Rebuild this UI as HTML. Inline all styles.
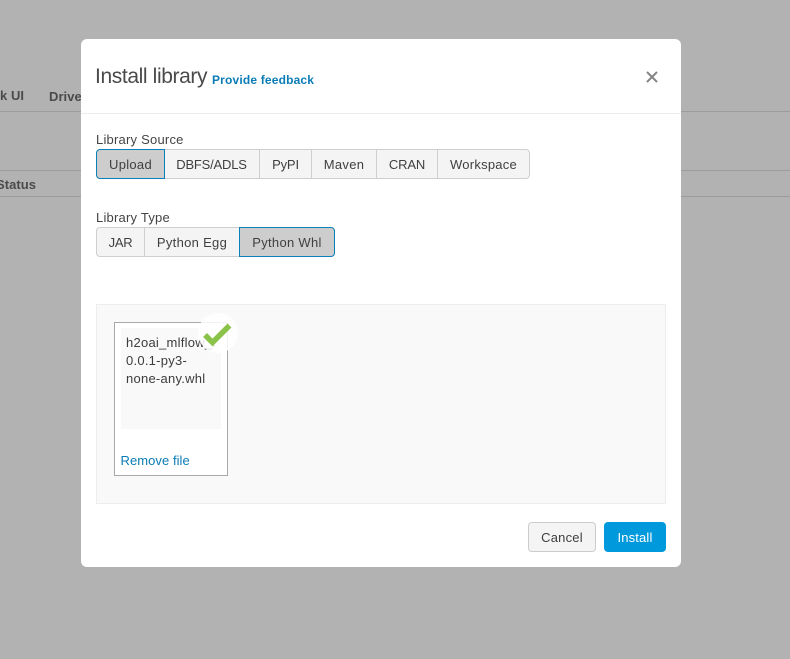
<!DOCTYPE html>
<html>
<head>
<meta charset="utf-8">
<style>
html,body{margin:0;padding:0;}
body{width:790px;height:659px;overflow:hidden;background:#b2b2b2;position:relative;font-family:"Liberation Sans",sans-serif;color:#333;}
.a{position:absolute;white-space:nowrap;}
.line{position:absolute;height:1px;background:#9c9c9c;}
.bg{font-size:13px;font-weight:bold;color:#4a4a4a;letter-spacing:.05px;line-height:16px;}
#modal{position:absolute;left:81px;top:39px;width:600px;height:528px;background:#fff;border-radius:6px;}
.btn{position:absolute;box-sizing:border-box;height:30px;top:0;background:#f4f4f4;border:1px solid #cfcfcf;font-size:13px;line-height:29px;text-align:center;color:#3f3f3f;letter-spacing:.3px;}
.sel{background:#cdcdcd;border-color:#0a7fb8;z-index:2;}
.grp{position:absolute;left:15px;height:30px;}
.lab{font-size:13px;line-height:16px;color:#444;letter-spacing:.22px;}
</style>
</head>
<body>
<div class="a bg" style="left:0;top:88px;">k UI</div>
<div class="a bg" style="left:49px;top:89px;">Drive</div>
<div class="a bg" style="left:-4px;top:177px;">Status</div>
<div class="line" style="left:0;top:111px;width:790px;"></div>
<div class="line" style="left:0;top:170px;width:790px;"></div>
<div class="line" style="left:0;top:196px;width:790px;"></div>

<div id="modal">
  <div class="a" style="left:14px;top:24px;font-size:21px;line-height:28px;color:#4a4a4a;letter-spacing:-.38px;">Install library</div>
  <div class="a" style="left:131px;top:33px;font-size:12px;line-height:16px;font-weight:bold;color:#0a7cb5;letter-spacing:.17px;">Provide feedback</div>
  <svg class="a" style="left:564px;top:31px;" width="14" height="14" viewBox="0 0 14 14"><path d="M2 2L12 12M12 2L2 12" stroke="#858585" stroke-width="2" fill="none"/></svg>
  <div class="a" style="left:0;top:74px;width:600px;height:1px;background:#ececec;"></div>

  <div class="a lab" style="left:15px;top:93px;">Library Source</div>
  <div class="grp" style="top:110px;width:434px;">
    <div class="btn sel" style="left:0;width:69px;border-radius:4px 0 0 4px;">Upload</div>
    <div class="btn" style="left:68px;width:96px;border-left:0;letter-spacing:-.2px;">DBFS/ADLS</div>
    <div class="btn" style="left:163px;width:53px;letter-spacing:-.15px;">PyPI</div>
    <div class="btn" style="left:215px;width:66px;">Maven</div>
    <div class="btn" style="left:280px;width:62px;letter-spacing:-.15px;">CRAN</div>
    <div class="btn" style="left:341px;width:93px;border-radius:0 4px 4px 0;letter-spacing:.25px;">Workspace</div>
  </div>

  <div class="a lab" style="left:15px;top:171px;">Library Type</div>
  <div class="grp" style="top:188px;width:239px;">
    <div class="btn" style="left:0;width:49px;border-radius:4px 0 0 4px;letter-spacing:-.3px;">JAR</div>
    <div class="btn" style="left:48px;width:96px;">Python Egg</div>
    <div class="btn sel" style="left:143px;width:96px;border-radius:0 4px 4px 0;">Python Whl</div>
  </div>

  <div class="a" style="left:15px;top:265px;width:570px;height:200px;box-sizing:border-box;background:#f9f9f9;border:1px solid #ededed;"></div>
  <div class="a" style="left:33px;top:283px;width:114px;height:154px;box-sizing:border-box;background:#fff;border:1px solid #a8a8a8;"></div>
  <div class="a" style="left:40px;top:289px;width:100px;height:101px;background:#f9f9f9;"></div>
  <div class="a" style="left:45px;top:295px;width:91px;overflow:hidden;font-size:13px;line-height:18px;color:#3c3c3c;letter-spacing:.25px;">h2oai_mlflow_i<br>0.0.1-py3-<br>none-any.whl</div>
  <div class="a" style="left:117px;top:274px;width:40px;height:40px;border-radius:50%;background:#fff;opacity:.85;"></div>
  <svg class="a" style="left:121px;top:282px;" width="32" height="28" viewBox="0 0 32 28"><path d="M3 14L10.500 21.500L27.500 4.500" stroke="#8bc24a" stroke-width="5.500" fill="none"/></svg>
  <div class="a" style="left:39.500px;top:413px;font-size:13px;line-height:18px;color:#0a7cb5;letter-spacing:.06px;">Remove file</div>

  <div class="btn" style="left:447px;top:483px;width:68px;border-radius:4px;background:#f4f4f4;border-color:#cccccc;letter-spacing:.2px;">Cancel</div>
  <div class="btn" style="left:523px;top:483px;width:62px;border-radius:4px;background:#0099dc;border-color:#0099dc;color:#fff;letter-spacing:.15px;">Install</div>
</div>
</body>
</html>
